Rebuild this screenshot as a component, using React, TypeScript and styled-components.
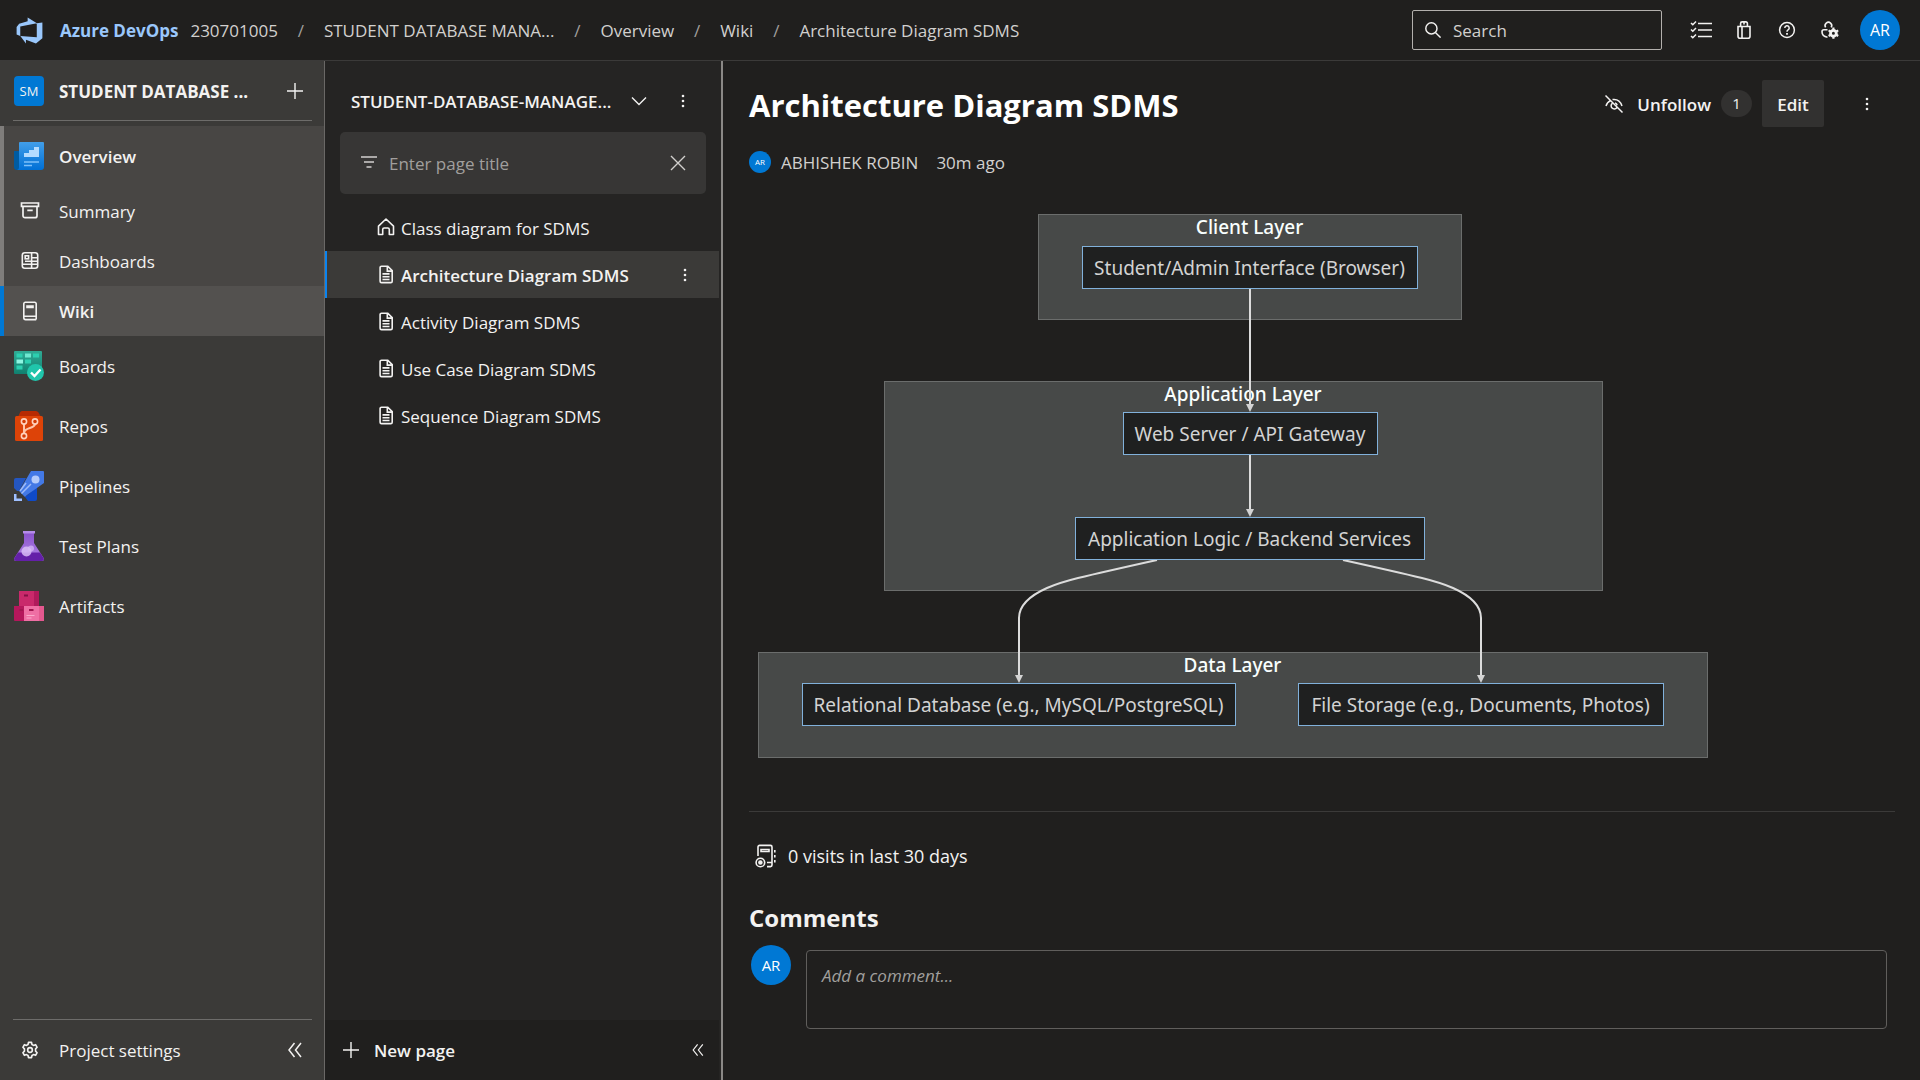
import React from 'react';
import styled, { createGlobalStyle } from 'styled-components';

const ui = `'Segoe UI', 'Open Sans', 'Noto Sans', sans-serif`;

const color = {
  page: '#201f1e',
  panel: '#252423',
  rail: '#3b3a38',
  group: '#484644',
  active: '#53514f',
  line: '#3b3a39',
  railLine: '#6d6c6a',
  text: '#f3f2f1',
  soft: '#d2d0ce',
  muted: '#a19f9d',
  blue: '#0078d4',
};

const GlobalStyle = createGlobalStyle`
  *, *::before, *::after { box-sizing: border-box; }
  body { margin: 0; background: ${color.page}; color: ${color.text}; font: 400 17px/24px ${ui}; }
  h1, h2, p, ul { margin: 0; padding: 0; }
  ul { list-style: none; }
  button, input, textarea { font: inherit; color: inherit; }
  a { color: inherit; text-decoration: none; }
`;

const Shell = styled.div`
  display: flex;
  flex-direction: column;
  height: 100vh;
`;

const Label = styled.span`
  padding-top: 2px;
`;

const Header = styled.header`
  display: flex;
  align-items: center;
  flex: none;
  height: 61px;
  padding: 0 20px 0 15px;
  border-bottom: 1px solid ${color.line};
`;

const Brand = styled.a`
  display: flex;
  align-items: center;
  gap: 16px;
  color: #9ac7fb;
  font-weight: 700;
  white-space: nowrap;
`;

const Crumbs = styled.nav`
  display: flex;
  align-items: center;
  flex: 1;
  min-width: 0;
  margin-left: 12px;
  padding-top: 2px;
  color: ${color.soft};
  white-space: nowrap;
`;

const Slash = styled.span`
  width: 46px;
  text-align: center;
  color: ${color.muted};
`;

const SearchBox = styled.div`
  display: flex;
  align-items: center;
  gap: 12px;
  width: 250px;
  height: 40px;
  padding: 0 12px;
  border: 1px solid #b3b0ad;
  border-radius: 2px;
`;

const TextInput = styled.input`
  flex: 1;
  min-width: 0;
  padding: 2px 0 0;
  border: 0;
  outline: 0;
  background: none;
  &::placeholder { color: ${(p: { $tone: string }) => p.$tone}; opacity: 1; }
`;

const Tools = styled.div`
  display: flex;
  gap: 3px;
  margin: 0 10px 0 19px;
`;

const IconButton = styled.button<{ $size?: number }>`
  display: flex;
  align-items: center;
  justify-content: center;
  flex: none;
  width: ${(p) => p.$size ?? 40}px;
  height: ${(p) => p.$size ?? 40}px;
  padding: 0;
  border: 0;
  background: none;
`;

const Avatar = styled.span<{ $size: number; $font: number }>`
  display: flex;
  align-items: center;
  justify-content: center;
  flex: none;
  width: ${(p) => p.$size}px;
  height: ${(p) => p.$size}px;
  border-radius: 50%;
  background: ${color.blue};
  color: #fff;
  font-size: ${(p) => p.$font}px;
  line-height: 1;
`;

const Body = styled.div`
  display: flex;
  flex: 1;
  min-height: 0;
`;

const Rail = styled.aside`
  display: flex;
  flex-direction: column;
  flex: none;
  width: 325px;
  background: ${color.rail};
  border-right: 1px solid #6a6866;
`;

const Project = styled.div`
  display: flex;
  align-items: center;
  height: 60px;
  margin: 0 12px 5px 13px;
  border-bottom: 1px solid ${color.railLine};
`;

const ProjectTile = styled.span`
  display: flex;
  align-items: center;
  justify-content: center;
  width: 30px;
  height: 30px;
  margin: 0 15px 0 1px;
  border-radius: 4px;
  background: ${color.blue};
  font-size: 13px;
`;

const ProjectName = styled(Label)`
  flex: 1;
  font-weight: 700;
  white-space: nowrap;
`;

const NavGroup = styled.ul`
  background: ${color.group};
`;

const NavLink = styled.a<{ $small?: boolean; $bold?: boolean; $bar?: string; $active?: boolean }>`
  display: grid;
  grid-template-columns: 32px 1fr;
  align-items: center;
  column-gap: 13px;
  height: ${(p) => (p.$small ? 50 : 60)}px;
  padding-left: 10px;
  border-left: 4px solid ${(p) => p.$bar ?? 'transparent'};
  background: ${(p) => (p.$active ? color.active : 'transparent')};
  font-weight: ${(p) => (p.$bold ? 600 : 400)};
  svg { justify-self: ${(p) => (p.$small ? 'center' : 'start')}; }
`;

const RailFooter = styled.div`
  display: flex;
  align-items: center;
  height: 61px;
  margin: auto 12px 0 13px;
  border-top: 1px solid ${color.railLine};
`;

const Settings = styled.a`
  display: flex;
  align-items: center;
  flex: 1;
  gap: 20px;
  padding-left: 8px;
`;

const Panel = styled.section`
  display: flex;
  flex-direction: column;
  flex: none;
  width: 398px;
  background: ${color.panel};
  border-right: 2px solid #8a8886;
`;

const PanelHead = styled.div`
  display: flex;
  align-items: center;
  height: 40px;
  margin: 20px 16px 11px 26px;
`;

const WikiPicker = styled.button`
  display: flex;
  align-items: center;
  justify-content: space-between;
  flex: 1;
  padding: 0 12px 0 0;
  border: 0;
  background: none;
  font-weight: 600;
  white-space: nowrap;
`;

const Filter = styled.div`
  display: flex;
  align-items: center;
  gap: 10px;
  height: 62px;
  margin: 0 15px 10px;
  padding: 0 10px 0 19px;
  border-radius: 5px;
  background: #373635;
  color: ${color.soft};
`;

const PageRow = styled.li<{ $active?: boolean }>`
  display: flex;
  align-items: center;
  height: 47px;
  margin-right: 2px;
  padding: 0 14px 0 49px;
  border-left: 2px solid ${(p) => (p.$active ? '#0a84f0' : 'transparent')};
  background: ${(p) => (p.$active ? '#3b3a38' : 'transparent')};
  font-weight: ${(p) => (p.$active ? 600 : 400)};
`;

const PageLink = styled.a`
  display: flex;
  align-items: center;
  flex: 1;
  gap: 5px;
`;

const PanelFooter = styled.div`
  display: flex;
  align-items: center;
  height: 60px;
  margin: auto 2px 0 0;
  padding: 0 1px 0 16px;
  background: ${color.page};
`;

const NewPage = styled.button`
  display: flex;
  align-items: center;
  flex: 1;
  gap: 13px;
  padding: 0;
  border: 0;
  background: none;
  font-weight: 600;
`;

const Content = styled.main`
  flex: 1;
  min-width: 0;
  overflow: auto;
  padding: 19px 25px 19px 26px;
`;

const TitleRow = styled.div`
  display: flex;
  align-items: center;
  height: 47px;
  padding-right: 8px;
`;

const Title = styled.h1`
  flex: 1;
  padding-top: 2px;
  font-size: 31px;
  line-height: 40px;
  font-weight: 700;
  color: #fff;
`;

const Unfollow = styled.button`
  display: flex;
  align-items: center;
  gap: 13px;
  padding: 0;
  border: 0;
  background: none;
  font-weight: 600;
`;

const Badge = styled.span`
  width: 31px;
  margin: 0 10px;
  border-radius: 14px;
  background: #323130;
  font-size: 15px;
  line-height: 27px;
  text-align: center;
`;

const EditButton = styled.button`
  width: 62px;
  height: 47px;
  margin-right: 23px;
  padding: 2px 0 0;
  border: 0;
  border-radius: 2px;
  background: #323130;
  font-weight: 600;
`;

const Meta = styled.div`
  display: flex;
  align-items: center;
  gap: 10px;
  height: 22px;
  margin: 24px 0 41px;
  color: ${color.soft};
`;

const Age = styled.time`
  margin-left: 8px;
  padding-top: 2px;
`;

const Diagram = styled.svg`
  display: block;
  max-width: 100%;
  margin-left: 9px;
  font-family: 'Trebuchet MS', 'Noto Sans', sans-serif;
  font-size: 19px;
  text-anchor: middle;
`;

const Cluster = styled.rect`
  fill: #474948;
  stroke: #6b6d6c;
`;

const Node = styled.rect`
  fill: #1f2020;
  stroke: #81b1db;
`;

const Edge = styled.path`
  fill: none;
  stroke: #dcdcdc;
  stroke-width: 2px;
`;

const Visits = styled.div`
  display: flex;
  align-items: center;
  gap: 11px;
  height: 88px;
  margin-top: 53px;
  padding-left: 6px;
  border-top: 1px solid ${color.line};
  font-size: 18px;
`;

const CommentsTitle = styled.h2`
  margin: 3px 0 11px;
  font-size: 24px;
  line-height: 32px;
  font-weight: 700;
`;

const CommentRow = styled.div`
  display: flex;
  gap: 15px;
  padding: 0 8px 0 2px;
`;

const CommentBox = styled.textarea`
  display: block;
  flex: 1;
  height: 79px;
  margin-top: 5px;
  padding: 13px 15px;
  border: 1px solid #605e5c;
  border-radius: 4px;
  outline: 0;
  resize: none;
  background: none;
  &::placeholder { color: ${color.muted}; font-style: italic; opacity: 1; }
`;

type LineProps = { size?: number; width?: number; children: React.ReactNode };
const Line = ({ size = 20, width = 1.4, children }: LineProps) => (
  <svg width={size} height={size} viewBox="0 0 20 20" fill="none" stroke="currentColor" strokeWidth={width} aria-hidden="true">
    {children}
  </svg>
);

const PlusIcon = () => <Line><path d="M10 2v16M2 10h16" /></Line>;
const ChevronDown = () => <Line><path d="M3 6.5l7 7 7-7" /></Line>;
const CloseIcon = () => <Line><path d="M3 3l14 14M17 3L3 17" /></Line>;
const SearchIcon = () => <Line size={16} width={1.8}><circle cx="8" cy="8" r="7" /><path d="M13 13l6.5 6.5" /></Line>;
const DotsIcon = () => (
  <Line><g fill="currentColor" stroke="none"><circle cx="10" cy="5" r="1.3" /><circle cx="10" cy="10" r="1.3" /><circle cx="10" cy="15" r="1.3" /></g></Line>
);
const CollapseIcon = ({ size = 20 }: { size?: number }) => (
  <Line size={size} width={1.5}><path d="M9.5 3L4 10l5.500 7M16 3l-5.500 7 5.500 7" /></Line>
);
const FilterIcon = () => <Line><path d="M2 4h16M5 9h10M7.500 14h5" /></Line>;
const HomeIcon = () => (
  <Line width={1.6}><path d="M2.500 8.200L10 1l7.500 7.200v8.300h-4.200v-5a1.500 1.500 0 0 0-1.500-1.500H8.200a1.500 1.500 0 0 0-1.500 1.500v5H2.500z" strokeLinejoin="round" /></Line>
);
const PageIcon = () => (
  <Line width={1.6}><path d="M5.500 1.200h6.300l4.400 4.400v10.600a1.400 1.400 0 0 1-1.400 1.400H5.500a1.400 1.400 0 0 1-1.400-1.400V2.600a1.400 1.400 0 0 1 1.400-1.400zM11.300 1.400v4.700H16M6.500 8.900h7M6.500 11.700h7M6.500 14.500h7" /></Line>
);
const SummaryIcon = () => (
  <Line width={1.7}><path d="M1.500 2h17v3.300h-17zM3 5.500v9.200a2 2 0 0 0 2 2h10a2 2 0 0 0 2-2V5.500M7.300 9.300h5.400" /></Line>
);
const DashboardIcon = () => (
  <Line width={1.6}><rect x="2.300" y="1.800" width="15.400" height="15.400" rx="2.500" /><path d="M11.600 2v15M2.500 13.300h15M12 6.700h5.500M5 10.200h6.500M12 10.200h5.500" /><rect x="5.200" y="4.800" width="3.400" height="3" /></Line>
);
const WikiIcon = () => (
  <Line width={1.6}><path d="M16.200 14.500V2.800A1.500 1.500 0 0 0 14.700 1.300H5.300a1.500 1.500 0 0 0-1.500 1.500v14a1.800 1.800 0 0 0 1.800 1.800h10.600M4 15.200h12.200v3.400M7 5h6v1.500H7z" /></Line>
);
const ListIcon = () => (
  <svg width="22" height="20" viewBox="0 0 22 20" fill="none" stroke="currentColor" strokeWidth="1.500" aria-hidden="true">
    <path d="M8 3.500h14M8 10h14M8 16.500h14M1 3l1.800 1.800L6 1.500M1 9.500l1.800 1.800L6 8M1 16l1.800 1.800L6 14.500" />
  </svg>
);
const BagIcon = () => (
  <Line width={1.6}><path d="M4 6.500h12v9.700a2 2 0 0 1-2 2H6a2 2 0 0 1-2-2zM6.600 6.500V3.400a1.500 1.500 0 0 1 1.500-1.500h3.800a1.500 1.500 0 0 1 1.500 1.500v3.100M10 2v2.500M8 6.500v11.500" /></Line>
);
const HelpIcon = () => (
  <Line width={1.500}><circle cx="10" cy="10" r="7.400" /><path d="M7.800 8a2.200 2.200 0 1 1 3.300 1.900c-.8.500-1.100.8-1.100 1.800" /><path d="M10 13v1.700" strokeWidth="1.800" /></Line>
);
const UserGearIcon = () => (
  <Line width={1.6}>
    <path d="M5.600 7.300A3.300 3.300 0 1 1 11.200 7.300M7.500 9.800H4a2 2 0 0 0-2 2c0 3 2 5 5.500 5.400" />
    <circle cx="13.400" cy="13.200" r="2.900" strokeWidth="2.800" />
    <path d="M13.400 7.600v2.400M13.400 16.400v2.400M8.600 10.400l2 1.200M16.200 14.800l2 1.200M8.600 16l2-1.200M16.200 11.600l2-1.200" strokeWidth="2.200" />
  </Line>
);
const UnfollowIcon = () => (
  <Line width={1.500}><path d="M1.500 1.500l17 17M2 12c.8-2.600 2.200-4.300 4.300-5.200M8.500 5.600c4.600-.6 8 1.800 9.500 6.400M8.300 9.300a3.200 3.200 0 1 0 4.500 4.500M11 8.900a3.200 3.200 0 0 1 2.200 2.300" /></Line>
);
const GearIcon = () => (
  <Line size={18} width={1.8}>
    <circle cx="10" cy="10" r="2.600" />
    <path d="M8.300 1.500h3.400l.5 2.400 1.700 1 2.300-.8 1.700 2.900-1.700 1.700v2.600l1.700 1.700-1.700 2.900-2.300-.8-1.700 1-.5 2.400H8.300l-.5-2.400-1.700-1-2.300.8-1.700-2.900 1.700-1.700V8.700L2.100 7l1.700-2.900 2.300.8 1.700-1z" strokeLinejoin="round" />
  </Line>
);
const VisitsIcon = () => (
  <svg width="22" height="24" viewBox="0 0 22 24" fill="none" stroke="currentColor" strokeWidth="1.600" aria-hidden="true">
    <path d="M3 12V3a1.600 1.600 0 0 1 1.600-1.600h10.800A1.600 1.600 0 0 1 17 3v18a1.600 1.600 0 0 1-1.600 1.600H12M6 5.500h8v2H6zM12 18.500h5" />
    <path d="M19.800 6v2.500M19.800 11v2.500M19.800 16v2.500" />
    <circle cx="5.400" cy="18.500" r="4.300" /><circle cx="5.400" cy="18.500" r="1.500" fill="currentColor" />
  </svg>
);

const DevOpsLogo = () => (
  <svg width="29" height="29" viewBox="0 0 18 18" fill="#9ac7fb" aria-hidden="true">
    <path d="M17 4v9.740l-4 3.280-6.200-2.260V17l-3.510-4.590 10.230.8V4.440zm-3.410.490L7.850 1v2.290L2.580 4.840 1 6.870v4.610l2.260 1V6.570z" />
  </svg>
);

const Art = ({ children }: { children: React.ReactNode }) => (
  <svg width="30" height="30" viewBox="0 0 30 30" aria-hidden="true">{children}</svg>
);

const OverviewArt = () => (
  <Art>
    <defs><linearGradient id="ov" x1="0" y1="0" x2="0" y2="1"><stop offset="0" stopColor="#429ee8" /><stop offset="1" stopColor="#0070d6" /></linearGradient></defs>
    <path d="M0 10h6v19H3a3 3 0 0 1-3-3z" fill="#005ba1" />
    <path d="M5 2a1 1 0 0 1 1-1h23a1 1 0 0 1 1 1v24a3 3 0 0 1-3 3H3c1.500-.5 2-1.500 2-3z" fill="url(#ov)" />
    <path d="M10 16v-4h5v-3h5V6h5v10z" fill="#b5dcff" />
    <path d="M10 21h15M10 24.500h8" stroke="#7cc0fa" strokeWidth="1.500" />
  </Art>
);
const BoardsArt = () => (
  <Art>
    <defs><linearGradient id="bd" x1="0" y1="0" x2="0" y2="1"><stop offset="0" stopColor="#30ab95" /><stop offset="1" stopColor="#10806f" /></linearGradient></defs>
    <rect width="28" height="23" rx="1" fill="url(#bd)" />
    <path d="M2.500 2.500h6v4h-6zM19 2.500h6v4h-6zM11 8.500h6v4h-6zM2.500 14.500h6v4h-6z" fill="#2ccfb0" />
    <path d="M11 2.500h6v4h-6z" fill="#6fe8d0" /><path d="M2.500 8.500h6.500v4H2.500z" fill="#8ff5e2" />
    <circle cx="21.500" cy="21.500" r="8.500" fill="#20c5ab" />
    <path d="M17 21.500l3.500 3.500 6-6.500" fill="none" stroke="#fff" strokeWidth="2.400" />
  </Art>
);
const ReposArt = () => (
  <Art>
    <path d="M4 6l2-4.500Q6.500 0 8 0h14q1.500 0 2.500 1.500L27 6z" fill="#b72a02" />
    <rect x="1" y="5" width="28" height="25" rx="1.500" fill="#dd4308" />
    <path d="M10 13v9M21 13c0 5-11 3-11 9" fill="none" stroke="#ffc4a8" strokeWidth="2" />
    <g fill="#d33c06" stroke="#ffd2bd" strokeWidth="1.600"><circle cx="10" cy="10.500" r="2.600" /><circle cx="21" cy="10.500" r="2.600" /><circle cx="10" cy="25" r="2.600" /></g>
  </Art>
);
const PipelinesArt = () => (
  <Art>
    <path d="M0 9q0-2 2-2h10L5 20H3l-3-3z" fill="#2456c0" />
    <path d="M23 16v12q0 2-2 2h-7l-3-4z" fill="#0f4ac8" />
    <path d="M17 0h12q1 0 1 1v11L13 24l-2 2-6-6 2-3z" fill="#4379e6" />
    <circle cx="21.500" cy="8.500" r="4" fill="#b4cbfa" />
    <path d="M17 13L7.500 22.500M12 12l-6 8" fill="none" stroke="#9fbcf8" strokeWidth="1.500" />
    <path d="M0 23h2.500v4.500H8V30H0z" fill="#9fc0ff" />
  </Art>
);
const TestArt = () => (
  <Art>
    <defs><linearGradient id="tp" x1="0" y1="0" x2="0" y2="1"><stop offset="0" stopColor="#8a52cc" /><stop offset="1" stopColor="#b187e6" /></linearGradient></defs>
    <path d="M10 2h10v10l9.300 14.500Q31 30 27.500 30h-25Q-1 30 .7 26.500L10 12z" fill="url(#tp)" />
    <path d="M4 21.500h22l3.300 5Q31 30 27.500 30h-25Q-1 30 .7 26.500z" fill="#6420a8" />
    <path d="M9 0h12v2.500H9z" fill="#b48be8" />
    <circle cx="12.500" cy="20.500" r="5" fill="#d9bdf7" fillOpacity=".85" /><circle cx="17" cy="17.500" r="3" fill="#d9bdf7" fillOpacity=".7" />
  </Art>
);
const ArtifactsArt = () => (
  <Art>
    <path d="M5 0h20v15H5z" fill="#c9296b" /><path d="M20 0h5v15h-5z" fill="#b01a5b" /><path d="M10 3.500h4v2h-4z" fill="#831045" />
    <path d="M0 15h10v15H1q-1 0-1-1z" fill="#b5175c" /><path d="M10 15h20v14q0 1-1 1H10z" fill="#ef6fa4" /><path d="M25 15h5v15h-5z" fill="#e4588f" />
    <path d="M15 18h4.500v2H15zM5.500 18H9v2H5.500z" fill="#a1154f" /><path d="M12.500 24.500h8M12.500 27h5" stroke="#fba9cb" strokeWidth="1.200" />
  </Art>
);

const crumbs = ['230701005', 'STUDENT DATABASE MANA...', 'Overview', 'Wiki', 'Architecture Diagram SDMS'];

const overviewLinks = [
  { label: 'Summary', icon: <SummaryIcon /> },
  { label: 'Dashboards', icon: <DashboardIcon /> },
  { label: 'Wiki', icon: <WikiIcon />, active: true },
];

const services = [
  { label: 'Boards', icon: <BoardsArt /> },
  { label: 'Repos', icon: <ReposArt /> },
  { label: 'Pipelines', icon: <PipelinesArt /> },
  { label: 'Test Plans', icon: <TestArt /> },
  { label: 'Artifacts', icon: <ArtifactsArt /> },
];

const pages = [
  { label: 'Class diagram for SDMS', home: true },
  { label: 'Architecture Diagram SDMS', active: true },
  { label: 'Activity Diagram SDMS' },
  { label: 'Use Case Diagram SDMS' },
  { label: 'Sequence Diagram SDMS' },
];

const clusters = [
  { label: 'Client Layer', x: 280, y: 0, w: 423, h: 105 },
  { label: 'Application Layer', x: 126, y: 167, w: 718, h: 209 },
  { label: 'Data Layer', x: 0, y: 438, w: 949, h: 105 },
];

const nodes = [
  { label: 'Student/Admin Interface (Browser)', x: 324, y: 32, w: 335 },
  { label: 'Web Server / API Gateway', x: 365, y: 198, w: 254 },
  { label: 'Application Logic / Backend Services', x: 317, y: 303, w: 349 },
  { label: 'Relational Database (e.g., MySQL/PostgreSQL)', x: 44, y: 469, w: 433 },
  { label: 'File Storage (e.g., Documents, Photos)', x: 540, y: 469, w: 365 },
];

const edges = [
  'M492 75V192',
  'M492 241V297',
  'M399 346C372 352 345 358 320 364C308 367 298 370 289 374C271 382 261 392 261 404V463',
  'M585 346C612 352 639 358 664 364C676 367 686 370 695 374C713 382 723 392 723 404V463',
];

const ArchitectureDiagram = () => (
  <Diagram width="950" height="544" viewBox="0 0 950 544" role="img" aria-label="Architecture diagram">
    <defs>
      <marker id="arrow" viewBox="0 0 8 8" refX="2" refY="4" markerWidth="8" markerHeight="8" markerUnits="userSpaceOnUse" orient="auto">
        <path d="M0 0L8 4L0 8z" fill="#d3d3d3" />
      </marker>
    </defs>
    {clusters.map((c) => (
      <g key={c.label}>
        <Cluster x={c.x + 0.5} y={c.y + 0.5} width={c.w} height={c.h} />
        <text x={c.x + c.w / 2} y={c.y + 20} fill="#f9fffe" fontWeight="500">{c.label}</text>
      </g>
    ))}
    {edges.map((d) => <Edge key={d} d={d} markerEnd="url(#arrow)" />)}
    {nodes.map((n) => (
      <g key={n.label}>
        <Node x={n.x + 0.5} y={n.y + 0.5} width={n.w} height={42} />
        <text x={n.x + n.w / 2} y={n.y + 29} fill="#d3d3d3">{n.label}</text>
      </g>
    ))}
  </Diagram>
);

export default function App() {
  return (
    <Shell>
      <GlobalStyle />
      <Header>
        <Brand href="#"><DevOpsLogo /><Label>Azure DevOps</Label></Brand>
        <Crumbs aria-label="Breadcrumb">
          {crumbs.map((c, i) => (
            <React.Fragment key={c}>
              {i > 0 && <Slash>/</Slash>}
              <a href="#">{c}</a>
            </React.Fragment>
          ))}
        </Crumbs>
        <SearchBox>
          <SearchIcon />
          <TextInput $tone={color.soft} placeholder="Search" aria-label="Search" />
        </SearchBox>
        <Tools>
          <IconButton aria-label="Work items"><ListIcon /></IconButton>
          <IconButton aria-label="Marketplace"><BagIcon /></IconButton>
          <IconButton aria-label="Help"><HelpIcon /></IconButton>
          <IconButton aria-label="User settings"><UserGearIcon /></IconButton>
        </Tools>
        <Avatar $size={40} $font={16}>AR</Avatar>
      </Header>

      <Body>
        <Rail>
          <Project>
            <ProjectTile>SM</ProjectTile>
            <ProjectName>STUDENT DATABASE ...</ProjectName>
            <IconButton aria-label="Add" $size={34}><PlusIcon /></IconButton>
          </Project>
          <nav aria-label="Project">
            <NavGroup>
              <li><NavLink href="#" $bold $bar="#7f7d7b"><OverviewArt /><Label>Overview</Label></NavLink></li>
              {overviewLinks.map((l) => (
                <li key={l.label}>
                  <NavLink href="#" $small $bold={l.active} $active={l.active} $bar={l.active ? color.blue : '#7f7d7b'}>
                    {l.icon}<Label>{l.label}</Label>
                  </NavLink>
                </li>
              ))}
            </NavGroup>
            <ul>
              {services.map((s) => (
                <li key={s.label}><NavLink href="#">{s.icon}<Label>{s.label}</Label></NavLink></li>
              ))}
            </ul>
          </nav>
          <RailFooter>
            <Settings href="#"><GearIcon /><Label>Project settings</Label></Settings>
            <IconButton aria-label="Collapse navigation" $size={34}><CollapseIcon /></IconButton>
          </RailFooter>
        </Rail>

        <Panel>
          <PanelHead>
            <WikiPicker><Label>STUDENT-DATABASE-MANAGE...</Label><ChevronDown /></WikiPicker>
            <IconButton aria-label="More wiki options" $size={44}><DotsIcon /></IconButton>
          </PanelHead>
          <Filter>
            <FilterIcon />
            <TextInput $tone={color.muted} placeholder="Enter page title" aria-label="Enter page title" />
            <IconButton aria-label="Clear filter" $size={36}><CloseIcon /></IconButton>
          </Filter>
          <ul>
            {pages.map((p) => (
              <PageRow key={p.label} $active={p.active}>
                <PageLink href="#">{p.home ? <HomeIcon /> : <PageIcon />}<Label>{p.label}</Label></PageLink>
                {p.active && <IconButton aria-label="More page options"><DotsIcon /></IconButton>}
              </PageRow>
            ))}
          </ul>
          <PanelFooter>
            <NewPage><PlusIcon /><Label>New page</Label></NewPage>
            <IconButton aria-label="Collapse pages"><CollapseIcon size={16} /></IconButton>
          </PanelFooter>
        </Panel>

        <Content>
          <TitleRow>
            <Title>Architecture Diagram SDMS</Title>
            <Unfollow><UnfollowIcon /><Label>Unfollow</Label></Unfollow>
            <Badge>1</Badge>
            <EditButton>Edit</EditButton>
            <IconButton aria-label="More actions"><DotsIcon /></IconButton>
          </TitleRow>
          <Meta>
            <Avatar $size={22} $font={8}>AR</Avatar>
            <Label>ABHISHEK ROBIN</Label>
            <Age>30m ago</Age>
          </Meta>
          <ArchitectureDiagram />
          <Visits><VisitsIcon />0 visits in last 30 days</Visits>
          <CommentsTitle>Comments</CommentsTitle>
          <CommentRow>
            <Avatar $size={40} $font={15}>AR</Avatar>
            <CommentBox placeholder="Add a comment..." aria-label="Add a comment" />
          </CommentRow>
        </Content>
      </Body>
    </Shell>
  );
}
